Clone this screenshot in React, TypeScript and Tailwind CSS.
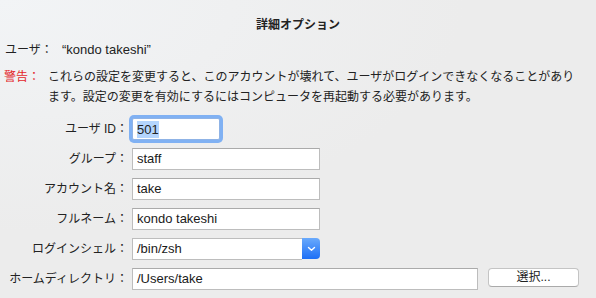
const labelCls = "w-[128px] shrink-0 text-right leading-[22px] text-[12px] text-[#222]";
const fieldCls =
  "h-[22px] bg-white border border-[#bdbdbd] border-t-[#aaaaaa] pl-[4px] flex items-center text-[13px] text-[#1a1a1a] font-['Liberation_Sans']";

function Chevron() {
  return (
    <svg width="9" height="6" viewBox="0 0 9 6" fill="none">
      <polyline points="1.5,1.5 4.5,4.3 7.5,1.5" stroke="white" strokeWidth="1.4" strokeLinecap="round" strokeLinejoin="round" />
    </svg>
  );
}

const App = () => {
  return (
    <div
      className="w-[596px] h-[298px] overflow-hidden bg-[radial-gradient(ellipse_at_top_left,#f2f4f6_0%,#ececec_55%)] text-[#222]"
      style={{ fontFamily: '"Liberation Sans", "Noto Sans CJK JP", sans-serif' }}
    >
      <h1 className="pt-[16px] text-center text-[12px] font-bold leading-[18px]">詳細オプション</h1>

      <div className="mt-[7px] flex text-[12px] leading-[18px]">
        <span className="pl-[5px] w-[62px]">ユーザ：</span>
        <span className="text-[13px]">“kondo takeshi”</span>
      </div>

      <div className="mt-[8px] flex text-[12px] leading-[20px]">
        <span className="pl-[4px] w-[48px] shrink-0 text-[#e3262b]">警告：</span>
        <p className="whitespace-nowrap">
          これらの設定を変更すると、このアカウントが壊れて、ユーザがログインできなくなることがあり
          <br />
          ます。設定の変更を有効にするにはコンピュータを再起動する必要があります。
        </p>
      </div>

      <div className="mt-[11px] flex flex-col gap-[8px]">
        <div className="flex items-center gap-[4px]">
          <span className={labelCls}>ユーザ ID：</span>
          <div className="w-[88px] h-[22px] rounded-[2px] ring-[3px] ring-[#80b1f3] bg-white border border-[#8fb3e6] pl-[4px] flex items-center text-[13px] font-['Liberation_Sans']">
            <span className="bg-[#b4d5fe] leading-[17px]">501</span>
          </div>
        </div>

        <div className="flex items-center gap-[4px]">
          <span className={labelCls}>グループ：</span>
          <div className={`${fieldCls} w-[188px]`}>staff</div>
        </div>

        <div className="flex items-center gap-[4px]">
          <span className={labelCls}>アカウント名：</span>
          <div className={`${fieldCls} w-[188px]`}>take</div>
        </div>

        <div className="flex items-center gap-[4px]">
          <span className={labelCls}>フルネーム：</span>
          <div className={`${fieldCls} w-[188px]`}>kondo takeshi</div>
        </div>

        <div className="flex items-center gap-[4px]">
          <span className={labelCls}>ログインシェル：</span>
          <div className="w-[188px] h-[22px] flex">
            <div className="flex-1 bg-white border border-[#bdbdbd] border-r-0 pl-[4px] flex items-center text-[13px] font-['Liberation_Sans'] text-[#1a1a1a]">
              /bin/zsh
            </div>
            <div className="w-[18px] h-[21px] rounded-r-[4px] bg-[linear-gradient(#6aaafc,#1d6ff6)] flex items-center justify-center">
              <Chevron />
            </div>
          </div>
        </div>

        <div className="flex items-center gap-[4px]">
          <span className={labelCls}>ホームディレクトリ：</span>
          <div className={`${fieldCls} w-[346px]`}>/Users/take</div>
          <button className="ml-[6px] -mt-[4px] w-[91px] h-[19px] rounded-[4px] bg-white border border-[#c4c4c4] border-b-[#aaaaaa] text-[12px] leading-[17px] text-[#222]">
            選択...
          </button>
        </div>

        {/* next row, only its top edge is in view */}
        <div className="flex items-center gap-[4px]">
          <span className={labelCls}></span>
          <div className={`${fieldCls} w-[346px]`}></div>
          <div className="ml-[6px] -mt-[4px] w-[91px] h-[19px] rounded-[4px] bg-white border border-[#c4c4c4]"></div>
        </div>
      </div>
    </div>
  );
};

export default App;
